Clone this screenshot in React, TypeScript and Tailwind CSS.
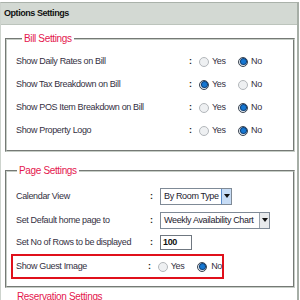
import React from "react";

type RadioProps = { checked?: boolean };

const Radio = ({ checked }: RadioProps) => (
  <span
    className={`inline-flex items-center justify-center w-[10px] h-[10px] rounded-full border ${
      checked ? "border-[#3c4652] bg-[#dfe6ee]" : "border-[#b3b7bb] bg-[#eef0f2]"
    }`}
  >
    {checked && <span className="w-[5px] h-[5px] rounded-full bg-[#1677d2] shadow-[0_0_0_1px_#0b3f78]"></span>}
  </span>
);

const YesNo = ({ value }: { value: "yes" | "no" }) => (
  <div className="flex items-center">
    <Radio checked={value === "yes"} />
    <span className="ml-[3px] w-[26px]">Yes</span>
    <Radio checked={value === "no"} />
    <span className="ml-[3px]">No</span>
  </div>
);

const Colon = () => <span className="font-bold text-[#222] w-[10px]">:</span>;

const billRows: { label: string; value: "yes" | "no" }[] = [
  { label: "Show Daily Rates on Bill", value: "no" },
  { label: "Show Tax Breakdown on Bill", value: "yes" },
  { label: "Show POS Item Breakdown on Bill", value: "no" },
  { label: "Show Property Logo", value: "no" },
];

const Legend = ({ children }: { children: React.ReactNode }) => (
  <legend className="ml-[6px] px-[2px] h-[13px] leading-[13px] text-[10px] text-[#e4174e]">{children}</legend>
);

const SelectBox = ({ text, width, active }: { text: string; width: string; active?: boolean }) => (
  <div className={`flex items-center h-[17px] border border-[#7f8a96] bg-white ${width}`}>
    <span className="flex-1 pl-[3px] text-[#1d1a2e] whitespace-nowrap overflow-hidden">{text}</span>
    <span
      className={`flex items-center justify-center w-[10px] h-[15px] border-l ${
        active ? "border-[#5a8ccc] bg-[#c7dcf5]" : "border-[#9aa3ad] bg-[#e8eaec]"
      }`}
    >
      <svg width="6" height="4" viewBox="0 0 6 4">
        <path d="M0 0h6L3 4z" fill="#111" />
      </svg>
    </span>
  </div>
);

export default function App() {
  return (
    <div className="w-[300px] h-[300px] overflow-hidden bg-white text-[9px] tracking-[-0.35px] leading-[13px] text-[#34303f] [font-family:'Liberation_Sans',Arial,sans-serif]">
      <div className="mt-[2px] w-[299px] h-[298px] border-t border-l border-r-2 border-t-[#aab2aa] border-l-[#cdd3cd] border-r-[#a6aea6]">
        <div className="h-[22px] flex items-center pl-[3px] bg-[#d3d9d3] border-b border-[#bcc4bc] font-bold text-[9px] tracking-[-0.45px] text-[#111]">
          Options Settings
        </div>

        <fieldset className="mt-[7px] ml-[4px] mr-[2px] border-2 [border-style:groove] border-[#c6cdc6] pl-[9px] pt-[5px] pb-[8px]">
          <Legend>Bill Settings</Legend>
          {billRows.map((r) => (
            <div key={r.label} className="flex items-center h-[23px]">
              <span className="w-[173px]">{r.label}</span>
              <Colon />
              <YesNo value={r.value} />
            </div>
          ))}
        </fieldset>

        <fieldset className="mt-[12px] ml-[4px] mr-[2px] border-2 [border-style:groove] border-[#c6cdc6] pl-[4px] pt-[7px] pb-[7px]">
          <Legend>Page Settings</Legend>
          <div className="flex items-center h-[24px] pl-[5px]">
            <span className="w-[134px]">Calendar View</span>
            <Colon />
            <SelectBox text="By Room Type" width="w-[72px]" active />
          </div>
          <div className="flex items-center h-[24px] pl-[5px]">
            <span className="w-[134px]">Set Default home page to</span>
            <Colon />
            <SelectBox text="Weekly Availability Chart" width="w-[110px]" />
          </div>
          <div className="flex items-center h-[20px] pl-[5px]">
            <span className="w-[134px]">Set No of Rows to be displayed</span>
            <Colon />
            <div className="w-[32px] h-[15px] border border-[#6f7780] pl-[2px] font-bold text-[#111] leading-[13px]">100</div>
          </div>
          <div className="mt-[2px] flex items-center h-[25px] w-[213px] border-2 border-[#e0101b]">
            <span className="pl-[3px] w-[137px]">Show Guest Image</span>
            <Colon />
            <Radio />
            <span className="ml-[3px] w-[27px]">Yes</span>
            <Radio checked />
            <span className="ml-[4px]">No</span>
          </div>
        </fieldset>

        <div className="mt-[2px] pl-[16px] text-[10px] text-[#e4174e]">Reservation Settings</div>
      </div>
    </div>
  );
}
